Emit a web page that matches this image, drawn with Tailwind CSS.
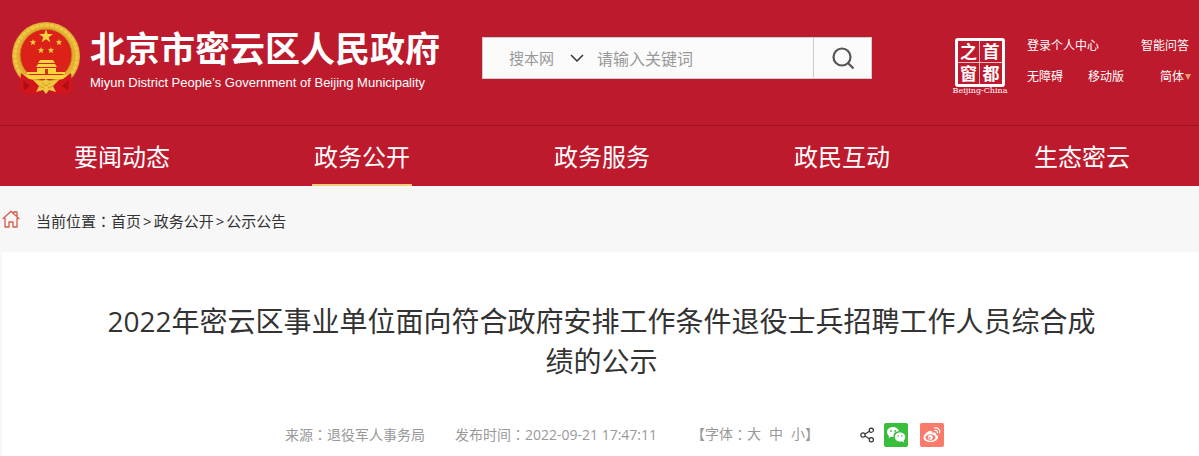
<!DOCTYPE html>
<html lang="zh-CN">
<head>
    <meta charset="UTF-8">
    <meta name="viewport" content="width=device-width, initial-scale=1.0">
    <title>北京市密云区人民政府</title>
    <script src="https://cdn.jsdelivr.net/npm/@tailwindcss/browser@4"></script>
</head>
<body class="bg-[#f7f7f7] text-[#333] font-['Open_Sans','Noto_Sans_CJK_SC',sans-serif]">
    <header class="bg-[#bd1a2d] text-white overflow-hidden">
        <!-- Logo, search and quick links -->
        <div class="flex items-start h-[125px]">
            <a href="#" class="flex items-start shrink-0 w-[441px] pl-[10px] pt-5">
                <svg class="w-[72px] h-[76px] shrink-0" viewBox="0 0 72 76" aria-hidden="true">
                    <circle cx="36" cy="36" r="34" fill="#e3ae32"/>
                    <circle cx="36" cy="36" r="31" fill="none" stroke="#f0c944" stroke-width="3" stroke-dasharray="4 1"/>
                    <circle cx="36" cy="35" r="26" fill="#dc2119" stroke="#c98d1d"/>
                    <g fill="#f6d33f">
                        <path d="M36 9l1.700 5h5.300l-4.300 3.200 1.600 5.100-4.300-3.100-4.300 3.100 1.600-5.100L29 14h5.300z"/>
                        <path id="star" d="M23 19l.8 2.300h2.500l-2 1.500.7 2.400-2-1.400-2 1.400.7-2.400-2-1.500h2.500z"/>
                        <use href="#star" x="26"/>
                        <use href="#star" x="8" y="8"/>
                        <use href="#star" x="18" y="8"/>
                        <path d="M28 43l2-3h13l2 3zM26 47l2-3h17l2 3zM27 48h19v4H27zM17 52h38v2H17zM14 55h44l-3 4H17z"/>
                    </g>
                    <path d="M35 49h3v5h-3z" fill="#d3321b"/>
                    <path d="M11 53l8 6 8 2 5 5-3 9-7-2-6 2-3-4-4 1zM61 53l-8 6-8 2-5 5 3 9 7-2 6 2 3-4 4 1z" fill="#d3141a"/>
                    <path d="M23 60l10 1 3-2 3 2 10-1-6 6 3 6-7-2-3 4-3-4-7 2 3-6z" fill="#f0c640"/>
                    <path d="M29 66l5 2M43 66l-5 2M32 63l4 3 4-3" fill="none" stroke="#d8982b"/>
                    <path d="M13 60l7 6-6 4zM59 60l-7 6 6 4z" fill="#a90f17"/>
                </svg>
                <span class="block pl-2 pt-2 font-['Liberation_Sans','Noto_Sans_CJK_SC',sans-serif]">
                    <span class="block text-[35px] leading-[44px] font-bold whitespace-nowrap">北京市密云区人民政府</span>
                    <span class="block text-[13px] leading-[22px] whitespace-nowrap">Miyun District People’s Government of Beijing Municipality</span>
                </span>
            </a>

            <form class="flex w-[390px] h-[42px] mt-[37px] ml-[41px] shrink-0 bg-[#fbfbfb] border border-[#ccc]">
                <div class="relative pl-[26px]">
                    <select aria-label="搜索范围" class="appearance-none bg-transparent w-[88px] h-full text-[15px] text-[#999] outline-none">
                        <option>搜本网</option>
                    </select>
                    <svg class="absolute right-[13px] top-[16px] w-[14px] h-[9px] pointer-events-none" viewBox="0 0 14 9" fill="none" stroke="#333" stroke-width="1.500"><path d="M1 1l6 6 6-6"/></svg>
                </div>
                <input type="text" aria-label="关键词" placeholder="请输入关键词" class="flex-1 min-w-0 bg-transparent text-[16px] placeholder:text-[#999] pt-[2px] outline-none">
                <button type="submit" aria-label="搜索" class="w-[58px] border-l border-[#ccc] flex items-center justify-center">
                    <svg class="w-6 h-6" viewBox="0 0 24 24" fill="none" stroke="#555" stroke-width="2.200"><circle cx="11" cy="11" r="8.500"/><path d="M17 17l5.500 5.500"/></svg>
                </button>
            </form>

            <div class="flex ml-auto pr-[10px] pt-[36px]">
                <a href="#" class="flex flex-col items-center w-[56px] mr-[19px] pt-[2px]">
                    <span class="grid grid-cols-2 grid-rows-2 w-[50px] h-[49px] border-3 border-white rounded-[3px] text-[17px] leading-[21px] font-bold text-center">
                        <span class="border-r border-b border-white/70">之</span>
                        <span class="border-b border-white/70">首</span>
                        <span class="border-r border-white/70">窗</span>
                        <span>都</span>
                    </span>
                    <span class="text-[8px] leading-[8px] whitespace-nowrap font-['DejaVu_Serif',serif]">Beijing-China</span>
                </a>
                <div class="w-[162px] text-[12px] leading-[20px] space-y-[11px]">
                    <div class="flex justify-between"><a href="#">登录个人中心</a><a href="#">智能问答</a></div>
                    <div class="flex">
                        <a href="#">无障碍</a>
                        <a href="#" class="ml-[25px]">移动版</a>
                        <a href="#" class="ml-auto flex items-center -mr-[2px]">简体<svg class="w-[6px] h-[6px] ml-px" viewBox="0 0 6 6" fill="#e0a06a"><path d="M0 0h6L3 6z"/></svg></a>
                    </div>
                </div>
            </div>
        </div>

        <!-- Main navigation -->
        <nav class="grid grid-cols-5 h-[61px] pl-[2px] -mr-[3px] border-t border-[#9f1021] text-[24px] leading-[62px] text-center">
            <a href="#">要闻动态</a>
            <a href="#" class="flex justify-center"><span class="w-[100px] h-[60px] border-b-2 border-[#f8cb78]">政务公开</span></a>
            <a href="#">政务服务</a>
            <a href="#">政民互动</a>
            <a href="#">生态密云</a>
        </nav>
    </header>

    <!-- Breadcrumb -->
    <div class="flex items-center h-[66px] pl-[2px] text-[15px]">
        <svg class="w-[18px] h-[18px]" viewBox="0 0 18 18" fill="none" stroke="#d65a4c" stroke-width="1.300" stroke-linejoin="round" aria-hidden="true"><path d="M.7 9L9 1.200 17.300 9M3 8v9h4v-5h4v5h4V8M11.500 3V2H15v5"/></svg>
        <div class="pl-4 pt-1">当前位置<span lang="zh-TW" class="font-['Noto_Sans_CJK_TC',sans-serif]">：</span><a href="#">首页</a><span class="px-[2px]">&gt;</span><a href="#">政务公开</a><span class="px-[2px]">&gt;</span><a href="#">公示公告</a></div>
    </div>

    <main class="ml-[2px] min-h-[204px] bg-white pt-[49px]">
        <h1 class="pl-[101px] pr-[99px] text-[28px] leading-[40px] text-center">2022年密云区事业单位面向符合政府安排工作条件退役士兵招聘工作人员综合成绩的公示</h1>
        <div class="flex justify-center items-start mt-[42px] pl-7 h-6 text-[14px] leading-[22px] text-[#999] whitespace-nowrap">
            <span>来源<span lang="zh-TW" class="font-['Noto_Sans_CJK_TC',sans-serif]">：</span>退役军人事务局</span>
            <span class="ml-[30px]">发布时间<span lang="zh-TW" class="font-['Noto_Sans_CJK_TC',sans-serif]">：</span>2022-09-21 17:47:11</span>
            <span class="ml-[34px] flex">【字体<span lang="zh-TW" class="font-['Noto_Sans_CJK_TC',sans-serif]">：</span><button type="button">大</button><button type="button" class="mx-2">中</button><button type="button">小</button>】</span>
            <span class="ml-[41px] flex items-center gap-3">
                <button type="button" aria-label="分享" class="-mr-[2px]">
                    <svg class="block w-[14px] h-4" viewBox="0 0 14 16" fill="none" stroke="#333" stroke-width="1.200"><circle cx="3" cy="8" r="2.200"/><circle cx="11.300" cy="3.200" r="2.100"/><circle cx="11.300" cy="12.800" r="2.100"/><path d="M5 7l4.400-2.700M5 9l4.400 2.700"/></svg>
                </button>
                <button type="button" aria-label="微信">
                    <svg class="block w-6 h-6" viewBox="0 0 24 24"><rect width="24" height="24" rx="2" fill="#39bd3d"/><path d="M9 4c-3.500 0-6 2.300-6 5 0 1.600.9 3 2.200 3.900L4.500 15l2.700-1.300c.7.200 1.500.3 2.300.2-.5-3.500 2.300-5.700 5.500-5.600C14.500 5.800 12 4 9 4z" fill="#fff"/><path d="M16 9.500c-3 0-5.200 2-5.200 4.500s2.200 4.500 5.200 4.500c.7 0 1.300-.1 1.900-.3l2.300 1.200-.6-2c1-.8 1.700-2 1.700-3.400 0-2.500-2.300-4.500-5.300-4.500z" fill="#fff"/><g fill="#39bd3d"><circle cx="7" cy="8" r=".9"/><circle cx="11.200" cy="8" r=".9"/><circle cx="14.300" cy="13" r=".8"/><circle cx="17.900" cy="13" r=".8"/></g></svg>
                </button>
                <button type="button" aria-label="微博">
                    <svg class="block w-6 h-6" viewBox="0 0 24 24"><rect width="24" height="24" rx="2" fill="#f97b6c"/><path d="M9.500 8c1.800-.7 3.100 0 2.600 1.900 2.400-1 4.400-.4 3.700 1.700 1.500.5 2.400 1.500 2.200 2.900-.3 2.500-3.600 4.500-7.400 4.500-4 0-7.100-1.900-7.100-4.600C3.500 12 6.700 9 9.500 8z" fill="#fff"/><ellipse cx="10.500" cy="14.500" rx="5" ry="3.300" fill="#f97b6c"/><circle cx="10.300" cy="14.500" r="2.400" fill="#fff"/><circle cx="9.700" cy="14.900" r=".9" fill="#f97b6c"/><path d="M14.500 5c3.500-.7 6 2 5.100 5M14.800 7.500c1.700-.4 2.900.8 2.500 2.300" fill="none" stroke="#fff" stroke-width="1.200" stroke-linecap="round"/></svg>
                </button>
            </span>
        </div>
    </main>
</body>
</html>
